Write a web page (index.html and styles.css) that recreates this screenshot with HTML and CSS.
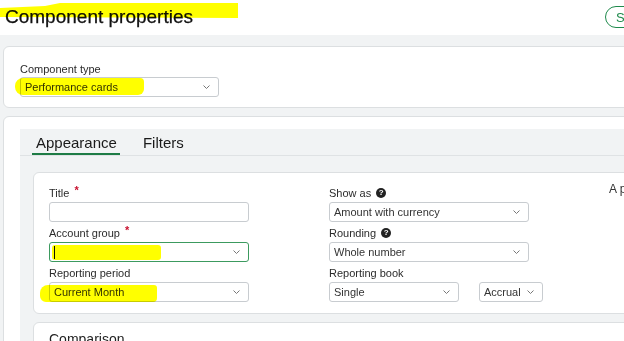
FILE: index.html
```html
<!DOCTYPE html>
<html lang="en">
<head>
  <meta charset="UTF-8">
  <meta name="viewport" content="width=device-width, initial-scale=1.0">
  <title>Component properties</title>
  <link rel="stylesheet" href="styles.css">
</head>
<body>
  <header class="topbar">
    <h1 class="page-title">Component properties</h1>
    <button class="btn-save">Save</button>
  </header>

  <main class="content">
    <section class="card card-type">
      <label class="field-label">Component type</label>
      <div class="select select-type">
        <span>Performance cards</span>
        <svg class="chev" width="7" height="4" viewBox="0 0 7 4"><path d="M0.5 0.5 L3.5 3.5 L6.5 0.5" fill="none" stroke="#777" stroke-width="1"/></svg>
      </div>
    </section>

    <section class="card card-settings">
      <div class="panel">
        <nav class="tabs">
          <span class="tab active">Appearance</span>
          <span class="tab">Filters</span>
        </nav>
        <div class="panel-body">
          <div class="subcard">
            <div class="col">
              <div class="field">
                <label class="field-label">Title <span class="req">*</span></label>
                <div class="input"></div>
              </div>
              <div class="field">
                <label class="field-label">Account group <span class="req">*</span></label>
                <div class="select focused">
                  <span class="caret"></span>
                  <svg class="chev" width="7" height="4" viewBox="0 0 7 4"><path d="M0.5 0.5 L3.5 3.5 L6.5 0.5" fill="none" stroke="#777" stroke-width="1"/></svg>
                </div>
              </div>
              <div class="field">
                <label class="field-label">Reporting period</label>
                <div class="select">
                  <span>Current Month</span>
                  <svg class="chev" width="7" height="4" viewBox="0 0 7 4"><path d="M0.5 0.5 L3.5 3.5 L6.5 0.5" fill="none" stroke="#777" stroke-width="1"/></svg>
                </div>
              </div>
            </div>

            <div class="col">
              <div class="field">
                <label class="field-label">Show as <span class="help">?</span></label>
                <div class="select">
                  <span>Amount with currency</span>
                  <svg class="chev" width="7" height="4" viewBox="0 0 7 4"><path d="M0.5 0.5 L3.5 3.5 L6.5 0.5" fill="none" stroke="#777" stroke-width="1"/></svg>
                </div>
              </div>
              <div class="field">
                <label class="field-label">Rounding <span class="help">?</span></label>
                <div class="select">
                  <span>Whole number</span>
                  <svg class="chev" width="7" height="4" viewBox="0 0 7 4"><path d="M0.5 0.5 L3.5 3.5 L6.5 0.5" fill="none" stroke="#777" stroke-width="1"/></svg>
                </div>
              </div>
              <div class="field">
                <label class="field-label">Reporting book</label>
                <div class="book-row">
                  <div class="select select-book">
                    <span>Single</span>
                    <svg class="chev" width="7" height="4" viewBox="0 0 7 4"><path d="M0.5 0.5 L3.5 3.5 L6.5 0.5" fill="none" stroke="#777" stroke-width="1"/></svg>
                  </div>
                  <div class="select select-basis">
                    <span>Accrual</span>
                    <svg class="chev" width="7" height="4" viewBox="0 0 7 4"><path d="M0.5 0.5 L3.5 3.5 L6.5 0.5" fill="none" stroke="#777" stroke-width="1"/></svg>
                  </div>
                </div>
              </div>
            </div>

            <div class="col-preview">A preview of the card</div>
          </div>

          <div class="subcard subcard-comparison">
            <h2 class="section-title">Comparison</h2>
          </div>
        </div>
      </div>
    </section>
  </main>

  <!-- highlighter marks drawn over the screenshot -->
  <span class="marker marker-title"></span>
  <span class="marker marker-type"></span>
  <span class="marker marker-account"></span>
  <span class="marker marker-month"></span>
</body>
</html>
```

FILE: styles.css
```css
html, body {
  height: 100%;
  overflow: hidden;
}
body {
  margin: 0;
  position: relative;
  font-family: "Liberation Sans", Arial, sans-serif;
  color: #333;
  background-color: #f1f3f4;
}

.topbar {
  display: flex;
  height: 35px;
  padding-left: 5px;
  background-color: #fff;
  overflow: hidden;
}
.page-title {
  flex: 1;
  margin: 0;
  padding-top: 5px;
  font-size: 19px;
  line-height: 23px;
  font-weight: normal;
  color: #111;
  -webkit-text-stroke: 0.25px #111;
}
.btn-save {
  flex-shrink: 0;
  box-sizing: border-box;
  width: 56px;
  height: 22px;
  margin-top: 6px;
  margin-right: -37px;
  padding: 0 0 0 10px;
  border: 1.5px solid #1f8a4c;
  border-radius: 11px;
  background-color: #fff;
  color: #1f8a4c;
  font-family: "Liberation Sans", Arial, sans-serif;
  font-size: 13px;
  text-align: left;
}

.content {
  padding: 11px 0 0 3px;
  overflow: hidden;
}
.card {
  box-sizing: border-box;
  width: 720px;
  background-color: #fff;
  border: 1px solid #dcdfe1;
  border-radius: 6px;
}
.card-type {
  padding: 15px 16px 10px;
}
.card-settings {
  margin-top: 8px;
  padding: 12px 0 0 16px;
  height: 260px;
}

.field-label {
  display: block;
  height: 14px;
  font-size: 11px;
  line-height: 14px;
  margin-bottom: 2px;
  white-space: nowrap;
  color: #2b2b2b;
}
.card-type .field-label {
  margin-bottom: 1px;
}
.req {
  color: #c8102e;
  font-weight: bold;
  position: relative;
  top: -3px;
  margin-left: 2px;
}
.help {
  display: inline-block;
  width: 10px;
  height: 10px;
  margin-left: 2px;
  border-radius: 50%;
  background-color: #222;
  color: #fff;
  font-size: 8px;
  line-height: 10px;
  font-weight: bold;
  text-align: center;
  vertical-align: top;
  margin-top: 2px;
}

.input, .select {
  box-sizing: border-box;
  height: 20px;
  border: 1px solid #c8ccd0;
  border-radius: 3px;
  background-color: #fff;
}
.select {
  display: flex;
  align-items: center;
  justify-content: space-between;
  padding: 0 8px 0 4px;
  font-size: 11px;
  color: #333;
}
.select.focused {
  border-color: #3c9a5f;
}
.caret {
  width: 1px;
  height: 13px;
  background-color: #111;
}
.chev {
  flex-shrink: 0;
}
.select-type {
  width: 199px;
}

.panel {
  height: 100%;
  background-color: #f1f3f4;
}
.tabs {
  display: flex;
  gap: 19px;
  padding: 5px 0 0 12px;
  border-bottom: 1px solid #dfe2e4;
}
.tab {
  font-size: 15px;
  line-height: 18px;
  padding: 0 3px 1px 4px;
  border-bottom: 2px solid transparent;
  color: #1a1a1a;
}
.tab.active {
  border-bottom-color: #1e7b45;
}

.panel-body {
  padding: 16px 0 0 13px;
}
.subcard {
  display: flex;
  gap: 80px;
  padding: 13px 15px 11px;
  background-color: #fff;
  border: 1px solid #dcdfe1;
  border-radius: 6px;
}
.col {
  width: 200px;
  flex-shrink: 0;
}
.field {
  margin-bottom: 4px;
}
.field:last-child {
  margin-bottom: 0;
}
.book-row {
  display: flex;
  gap: 20px;
}
.select-book {
  width: 130px;
  flex-shrink: 0;
}
.select-basis {
  width: 64px;
  flex-shrink: 0;
}
.col-preview {
  margin-top: -4px;
  font-size: 12px;
  line-height: 14px;
  white-space: nowrap;
}

.subcard-comparison {
  margin-top: 8px;
  padding: 8px 15px 20px;
}
.section-title {
  margin: 0;
  font-size: 14px;
  line-height: 16px;
  font-weight: normal;
  color: #222;
}

.marker {
  position: absolute;
  background-color: #ffff00;
  mix-blend-mode: multiply;
}
.marker-title {
  left: 0;
  top: 3px;
  width: 238px;
  height: 15px;
  clip-path: polygon(0 5px, 45px 3px, 60px 0, 238px 0, 238px 15px, 0 14px);
}
.marker-type {
  left: 15px;
  top: 78px;
  width: 129px;
  height: 17px;
  border-radius: 8px 4px 6px 8px;
}
.marker-account {
  left: 52px;
  top: 245px;
  width: 109px;
  height: 15px;
  border-radius: 3px;
}
.marker-month {
  left: 40px;
  top: 285px;
  width: 117px;
  height: 17px;
  border-radius: 8px 3px 4px 6px;
}
```
